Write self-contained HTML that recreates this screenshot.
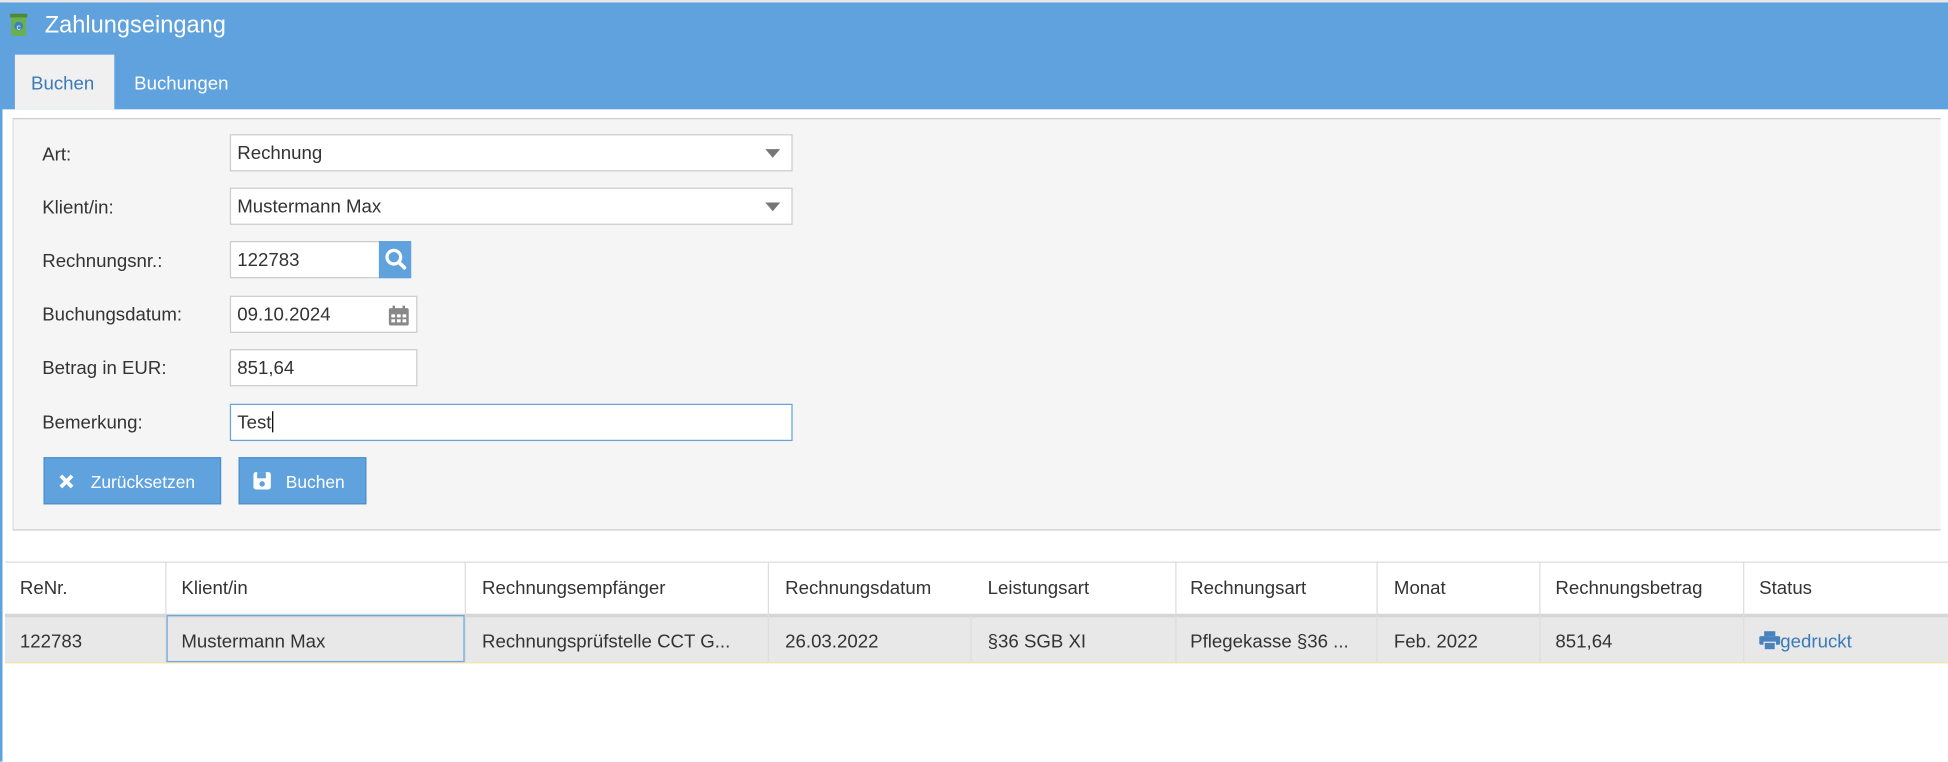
<!DOCTYPE html>
<html><head><meta charset="utf-8"><style>
html,body{margin:0;padding:0;width:1948px;height:762px;overflow:hidden;background:#fff;}
#s{position:absolute;left:0;top:0;width:1568px;height:613px;transform:scale(1.24235);transform-origin:0 0;font-family:"Liberation Sans",sans-serif;color:#333;}
.a{position:absolute;}
.lbl{position:absolute;left:34px;font-size:15px;}
.inp{position:absolute;left:185px;background:#fff;border:1px solid #ccc;box-sizing:border-box;height:30px;font-size:15px;line-height:30px;padding-left:5px;}
.tri{position:absolute;right:9px;top:11px;width:0;height:0;border-left:6px solid transparent;border-right:6px solid transparent;border-top:7px solid #777;}
.btn{position:absolute;top:368px;height:38px;background:#5fa2dd;border:1px solid #4a8fcc;box-sizing:border-box;color:#fff;font-size:14px;line-height:38px;}
.th,.td{position:absolute;font-size:15px;white-space:nowrap;}
.vl{position:absolute;width:1px;background:#ddd;}
</style></head><body><div id="s">
<div class="a" style="left:0;top:0;width:1568px;height:2px;background:#e6e6e6"></div>
<div class="a" style="left:0;top:2px;width:2px;height:611px;background:#5fa2dd"></div>
<div class="a" style="left:2px;top:2px;width:1566px;height:86px;background:#5fa2dd"></div>
<svg class="a" style="left:8px;top:11px" width="14" height="18" viewBox="0 0 14 18"><rect x="1" y="2" width="12" height="16" rx="2" fill="#6ab04c"/><rect x="0" y="0" width="14" height="3" fill="#4e8a35"/><circle cx="7" cy="10" r="3.5" fill="#3b7fc4"/><text x="7" y="13" font-size="7" text-anchor="middle" fill="#fff" font-family="Liberation Sans">c</text></svg>
<div class="a" style="left:36px;top:10px;font-size:19px;color:#fff">Zahlungseingang</div>
<div class="a" style="left:12px;top:44px;width:80px;height:44px;background:#f0f0f0"></div>
<div class="a" style="left:25px;top:59px;font-size:15px;color:#3a7ab8">Buchen</div>
<div class="a" style="left:108px;top:59px;font-size:15px;color:#fff">Buchungen</div>
<div class="a" style="left:10px;top:95px;width:1552px;height:332px;background:#f5f5f5;border-top:1px solid #ccc;border-left:1px solid #ddd;border-bottom:1px solid #ccc;box-sizing:border-box"></div>
<div class="lbl" style="top:116px">Art:</div>
<div class="inp" style="top:108px;width:453px">Rechnung<div class="tri"></div></div>
<div class="lbl" style="top:159px">Klient/in:</div>
<div class="inp" style="top:151px;width:453px">Mustermann Max<div class="tri"></div></div>
<div class="lbl" style="top:202px">Rechnungsnr.:</div>
<div class="inp" style="top:194px;width:121px">122783</div>
<div class="a" style="left:305px;top:194px;width:26px;height:30px;background:#5fa2dd"><svg width="26" height="30" viewBox="0 0 26 30"><circle cx="12" cy="13" r="5.5" fill="none" stroke="#fff" stroke-width="2.6"/><path d="M16 17l4.5 4.5" stroke="#fff" stroke-width="3" stroke-linecap="round"/></svg></div>
<div class="lbl" style="top:245px">Buchungsdatum:</div>
<div class="inp" style="top:238px;width:151px">09.10.2024<svg class="a" style="left:126px;top:6px" width="18" height="18" viewBox="0 0 18 18"><rect x="1" y="3" width="16" height="14" rx="1.5" fill="#888"/><rect x="4" y="1" width="2" height="4" fill="#888"/><rect x="12" y="1" width="2" height="4" fill="#888"/><g fill="#fff"><rect x="3" y="8" width="3" height="2.5"/><rect x="7.5" y="8" width="3" height="2.5"/><rect x="12" y="8" width="3" height="2.5"/><rect x="3" y="12" width="3" height="2.5"/><rect x="7.5" y="12" width="3" height="2.5"/><rect x="12" y="12" width="3" height="2.5"/></g></svg></div>
<div class="lbl" style="top:288px">Betrag in EUR:</div>
<div class="inp" style="top:281px;width:151px">851,64</div>
<div class="lbl" style="top:332px">Bemerkung:</div>
<div class="inp" style="top:325px;width:453px;border-color:#66a3dd">Test<span style="display:inline-block;width:1px;height:17px;background:#000;vertical-align:-3px"></span></div>
<div class="btn" style="left:35px;width:143px;padding-left:37px">Zurücksetzen<svg class="a" style="left:11px;top:12px" width="13" height="13" viewBox="0 0 13 13"><path d="M2 2l9 9M11 2l-9 9" stroke="#fff" stroke-width="3"/></svg></div>
<div class="btn" style="left:192px;width:103px;padding-left:37px">Buchen<svg class="a" style="left:10px;top:10px" width="16" height="16" viewBox="0 0 16 16"><rect x="1" y="1" width="14" height="14" rx="2" fill="#fff"/><rect x="4" y="1" width="7" height="5" fill="#5fa2dd"/><circle cx="8" cy="10.5" r="2.2" fill="#5fa2dd"/></svg></div>
<div class="a" style="left:4px;top:452px;width:1564px;height:1px;background:#ddd"></div>
<div class="a" style="left:4px;top:494px;width:1564px;height:3px;background:#d6d6d6"></div>
<div class="a" style="left:4px;top:497px;width:1564px;height:36px;background:#e8e8e8"></div>
<div class="a" style="left:4px;top:533px;width:1564px;height:1px;background:#efe3a8"></div>
<div class="vl" style="left:133px;top:452px;height:81px"></div>
<div class="vl" style="left:374px;top:452px;height:81px"></div>
<div class="vl" style="left:618px;top:452px;height:81px"></div>
<div class="vl" style="left:781px;top:495px;height:38px"></div>
<div class="vl" style="left:946px;top:452px;height:81px"></div>
<div class="vl" style="left:1108px;top:452px;height:81px"></div>
<div class="vl" style="left:1239px;top:452px;height:81px"></div>
<div class="vl" style="left:1403px;top:452px;height:81px"></div>
<div class="a" style="left:134px;top:495px;width:240px;height:38px;border:1px solid #6fa8dc;box-sizing:border-box"></div>
<div class="th" style="left:16px;top:465px">ReNr.</div>
<div class="th" style="left:146px;top:465px">Klient/in</div>
<div class="th" style="left:388px;top:465px">Rechnungsempfänger</div>
<div class="th" style="left:632px;top:465px">Rechnungsdatum</div>
<div class="th" style="left:795px;top:465px">Leistungsart</div>
<div class="th" style="left:958px;top:465px">Rechnungsart</div>
<div class="th" style="left:1122px;top:465px">Monat</div>
<div class="th" style="left:1252px;top:465px">Rechnungsbetrag</div>
<div class="th" style="left:1416px;top:465px">Status</div>
<div class="td" style="left:16px;top:508px">122783</div>
<div class="td" style="left:146px;top:508px">Mustermann Max</div>
<div class="td" style="left:388px;top:508px">Rechnungsprüfstelle CCT G...</div>
<div class="td" style="left:632px;top:508px">26.03.2022</div>
<div class="td" style="left:795px;top:508px">§36 SGB XI</div>
<div class="td" style="left:958px;top:508px">Pflegekasse §36 ...</div>
<div class="td" style="left:1122px;top:508px">Feb. 2022</div>
<div class="td" style="left:1252px;top:508px">851,64</div>
<div class="td" style="left:1416px;top:508px;color:#3a7ab8"><svg width="17" height="15" viewBox="0 0 17 15" style="vertical-align:-2px"><rect x="4" y="0" width="9" height="4" fill="#4a82bd"/><rect x="0" y="4" width="17" height="7" rx="1.5" fill="#4a82bd"/><rect x="4" y="9" width="9" height="6" fill="#4a82bd" stroke="#e8e8e8" stroke-width="1"/></svg>gedruckt</div>
</div></body></html>
